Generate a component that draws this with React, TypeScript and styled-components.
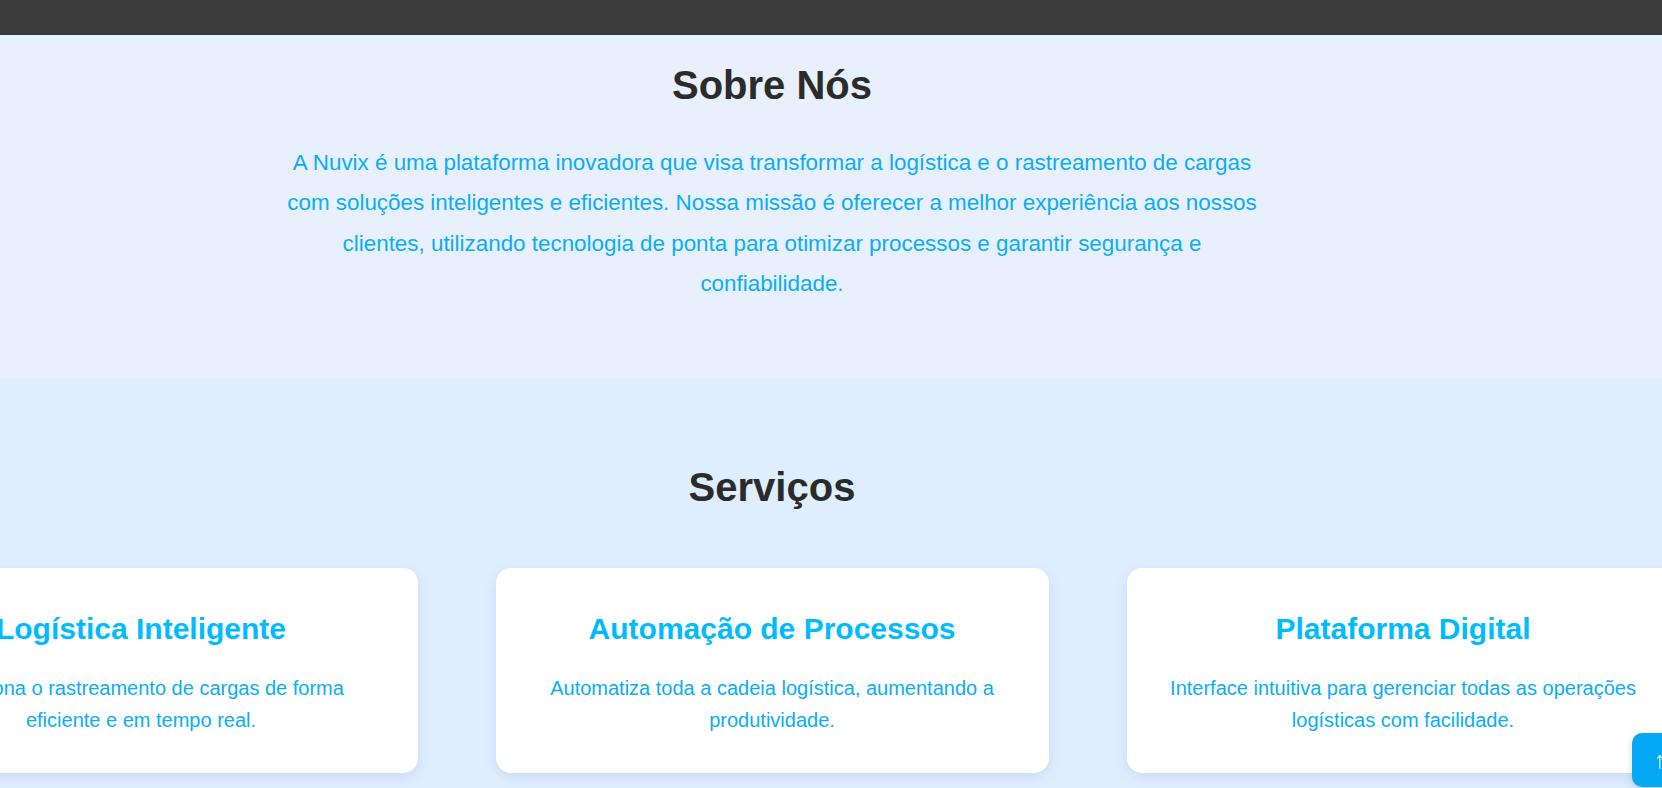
import styled, { createGlobalStyle } from "styled-components";

const GlobalStyle = createGlobalStyle`
  html, body {
    margin: 0;
    padding: 0;
    font-family: "Liberation Sans", Arial, sans-serif;
    scrollbar-width: none;
    overflow-x: hidden;
  }

  html::-webkit-scrollbar, body::-webkit-scrollbar {
    display: none;
  }

  * {
    box-sizing: border-box;
  }
`

const services = [
  {
    title: "Logística Inteligente",
    text: "Soluciona o rastreamento de cargas de forma eficiente e em tempo real.",
  },
  {
    title: "Automação de Processos",
    text: "Automatiza toda a cadeia logística, aumentando a produtividade.",
  },
  {
    title: "Plataforma Digital",
    text: "Interface intuitiva para gerenciar todas as operações logísticas com facilidade.",
  },
]

function App() {
  function scrollTop() {
    window.scrollTo({ top: 0, behavior: "smooth" })
  }

  return (
    <>
      <GlobalStyle />
      <StyledTopBar />
      <StyledAboutSection>
        <StyledContainer>
          <StyledSectionTitle>Sobre Nós</StyledSectionTitle>
          <StyledAboutText>
            A Nuvix é uma plataforma inovadora que visa transformar a logística e o rastreamento de cargas
            com soluções inteligentes e eficientes. Nossa missão é oferecer a melhor experiência aos nossos
            clientes, utilizando tecnologia de ponta para otimizar processos e garantir segurança e
            confiabilidade.
          </StyledAboutText>
        </StyledContainer>
      </StyledAboutSection>
      <StyledServicesSection>
        <StyledContainer>
          <StyledSectionTitle>Serviços</StyledSectionTitle>
          <StyledCardRow>
            {services.map((service) => (
              <StyledCard key={service.title}>
                <StyledCardTitle>{service.title}</StyledCardTitle>
                <StyledCardText>{service.text}</StyledCardText>
              </StyledCard>
            ))}
          </StyledCardRow>
        </StyledContainer>
      </StyledServicesSection>
      <StyledBackToTop type="button" onClick={scrollTop}>↑</StyledBackToTop>
    </>
  )
}

const StyledTopBar = styled.header`
  height: 35px;
  background: #3b3b3b;
`

const StyledContainer = styled.div`
  width: calc(100% - 118px);
  display: flex;
  flex-direction: column;
  align-items: center;
  text-align: center;
`

const StyledAboutSection = styled.section`
  background: #e8f0fe;
  padding: 27px 0 75px;
`

const StyledServicesSection = styled.section`
  background: #dfeeff;
  padding: 85px 0 60px;
  overflow-x: hidden;
`

const StyledSectionTitle = styled.h2`
  margin: 0;
  font-size: 40px;
  line-height: 46px;
  font-weight: 700;
  color: #2b2b2b;
`

const StyledAboutText = styled.p`
  margin: 35px 0 0;
  max-width: 985px;
  font-size: 22.4px;
  line-height: 1.8;
  color: #0aaef5;
`

const StyledCardRow = styled.div`
  margin-top: 58px;
  width: 100%;
  display: flex;
  justify-content: center;
  gap: 78px;
`

const StyledCard = styled.div`
  flex: 0 0 553px;
  height: 205px;
  padding: 43px 40px 37px;
  background: #ffffff;
  border-radius: 15px;
  box-shadow: 0 4px 14px rgba(0, 60, 130, 0.1);
`

const StyledCardTitle = styled.h3`
  margin: 0 0 26px;
  font-size: 30px;
  line-height: 35px;
  font-weight: 700;
  color: #00bcff;
`

const StyledCardText = styled.p`
  margin: 0;
  font-size: 20px;
  line-height: 32px;
  color: #0aaef5;
`

const StyledBackToTop = styled.button`
  position: fixed;
  left: 1632px;
  top: 733px;
  width: 56px;
  height: 54px;
  display: flex;
  align-items: center;
  justify-content: center;
  border: none;
  border-radius: 10px;
  background: #03a9f4;
  color: #ffffff;
  font-family: "Liberation Sans", Arial, sans-serif;
  font-size: 24px;
  font-weight: 700;
  cursor: pointer;
  box-shadow: 0 2px 8px rgba(0, 0, 0, 0.15);
`

export default App;
